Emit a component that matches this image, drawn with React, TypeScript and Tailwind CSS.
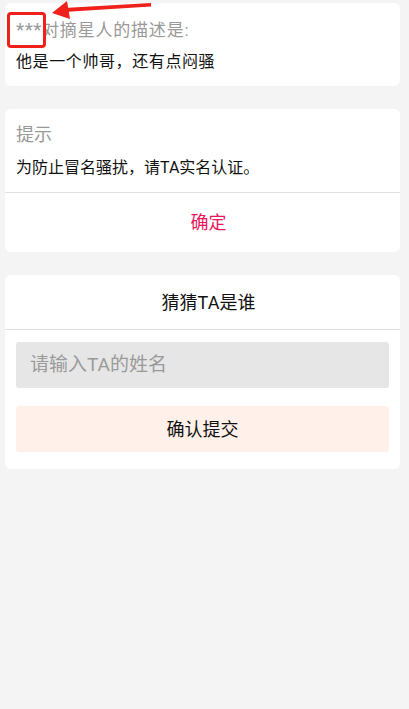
import React from "react";

export default function App() {
  const font = { fontFamily: 'Roboto, "Noto Sans CJK SC", "Noto Sans", sans-serif' };
  return (
    <div className="relative w-[409px] h-[709px] bg-[#f4f4f4] overflow-hidden" style={font}>
      <div className="pt-[3px] pl-[5px] flex flex-col gap-[23px]">
        {/* Card 1 */}
        <div className="w-[395px] bg-white rounded-[6px] pt-[15px] pb-[12px] px-[11px]">
          <div className="text-[17px] leading-[24px] text-[#999999] tracking-[0.8px]">
            <span className="text-[19px] tracking-[0.5px]">***</span>对摘星人的描述是:
          </div>
          <div className="mt-[8px] text-[16px] leading-[24px] text-[#111111] tracking-[0.6px]">他是一个帅哥，还有点闷骚</div>
        </div>

        {/* Card 2 */}
        <div className="w-[395px] bg-white rounded-[6px]">
          <div className="pt-[13px] pb-[12px] px-[11px] border-b border-[#e0e0e0]">
            <div className="text-[18px] leading-[26px] text-[#999999]">提示</div>
            <div className="mt-[8px] text-[16px] leading-[24px] text-[#111111]">为防止冒名骚扰，请TA实名认证。</div>
          </div>
          <div className="h-[59px] flex items-center justify-center pl-[12px] text-[18px] text-[#e8175d]">确定</div>
        </div>

        {/* Card 3 */}
        <div className="w-[395px] bg-white rounded-[6px]">
          <div className="h-[55px] flex items-center justify-center pl-[12px] border-b border-[#e0e0e0] text-[18px] text-[#111111]">猜猜TA是谁</div>
          <div className="px-[11px] pt-[12px] pb-[17px] flex flex-col gap-[18px]">
            <div className="h-[46px] rounded-[3px] bg-[#e6e6e6] flex items-center px-[14px] text-[19px] text-[#9a9a9a]">请输入TA的姓名</div>
            <div className="h-[46px] rounded-[3px] bg-[#fff1e9] flex items-center justify-center text-[18px] text-[#111111]">确认提交</div>
          </div>
        </div>
      </div>

      {/* Annotation overlay */}
      <div className="absolute left-[7px] top-[12px] w-[39px] h-[36px] border-[3px] border-[#f0201a] rounded-[4px]" />
      <svg className="absolute left-0 top-0" width="409" height="60" viewBox="0 0 409 60">
        <polygon points="151,3 151,6.5 64,12 64,8" fill="#f0201a" />
        <polygon points="52,13 67,1 70,19" fill="#f0201a" />
      </svg>
    </div>
  );
}
